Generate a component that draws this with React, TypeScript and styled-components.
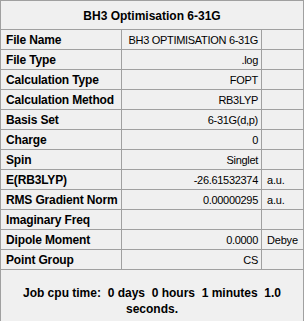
import React, { FunctionComponent } from 'react';
import styled, { createGlobalStyle } from 'styled-components';

const GlobalStyle = createGlobalStyle`
  html, body {
    margin: 0;
    padding: 0;
    background-color: #f0f0f0;
  }
`;

const Panel = styled.div`
  width: 304px;
  height: 321px;
  box-sizing: border-box;
  border: 1px solid #a0a0a0;
  border-bottom: none;
  background-color: #f0f0f0;
  font-family: 'Liberation Sans', Arial, sans-serif;
  color: #000;
  display: flex;
  flex-direction: column;
`;

const Title = styled.div`
  height: 28px;
  display: flex;
  align-items: center;
  justify-content: center;
  font-size: 12px;
  font-weight: bold;
  padding-top: 1px;
  box-sizing: border-box;
`;

const Table = styled.div`
  display: grid;
  grid-template-columns: 121px 140px 1fr;
  border-top: 1px solid #a0a0a0;
`;

const Cell = styled.div<{ $align?: 'left' | 'right'; $last?: boolean }>`
  height: 20px;
  box-sizing: border-box;
  border-bottom: 1px solid #a0a0a0;
  border-right: ${(p) => (p.$last ? 'none' : '1px solid #a0a0a0')};
  display: flex;
  align-items: center;
  justify-content: ${(p) => (p.$align === 'right' ? 'flex-end' : 'flex-start')};
  overflow: hidden;
  white-space: nowrap;
`;

const Label = styled(Cell)`
  padding-left: 5px;
  font-size: 12px;
  font-weight: bold;
  letter-spacing: -0.15px;
`;

const Value = styled(Cell)`
  padding-right: 3px;
  font-size: 11px;
  letter-spacing: -0.3px;
`;

const Unit = styled(Cell)`
  padding-left: 5px;
  font-size: 11px;
  letter-spacing: -0.2px;
`;

const Footer = styled.div`
  padding: 15px 10px 0;
  text-align: center;
  font-size: 12px;
  font-weight: bold;
  line-height: 16px;
  white-space: pre-wrap;
`;

type Row = { label: string; value: string; unit?: string };

const rows: Row[] = [
  { label: 'File Name', value: 'BH3 OPTIMISATION 6-31G' },
  { label: 'File Type', value: '.log' },
  { label: 'Calculation Type', value: 'FOPT' },
  { label: 'Calculation Method', value: 'RB3LYP' },
  { label: 'Basis Set', value: '6-31G(d,p)' },
  { label: 'Charge', value: '0' },
  { label: 'Spin', value: 'Singlet' },
  { label: 'E(RB3LYP)', value: '-26.61532374', unit: 'a.u.' },
  { label: 'RMS Gradient Norm', value: '0.00000295', unit: 'a.u.' },
  { label: 'Imaginary Freq', value: '' },
  { label: 'Dipole Moment', value: '0.0000', unit: 'Debye' },
  { label: 'Point Group', value: 'CS' },
];

const App: FunctionComponent = () => (
  <>
    <GlobalStyle />
    <Panel>
      <Title>BH3 Optimisation 6-31G</Title>
      <Table>
        {rows.map((row) => (
          <React.Fragment key={row.label}>
            <Label>{row.label}</Label>
            <Value $align="right">{row.value}</Value>
            <Unit $last>{row.unit ?? ''}</Unit>
          </React.Fragment>
        ))}
      </Table>
      <Footer>{'Job cpu time:  0 days  0 hours  1 minutes  1.0 seconds.'}</Footer>
    </Panel>
  </>
);

export default App;
